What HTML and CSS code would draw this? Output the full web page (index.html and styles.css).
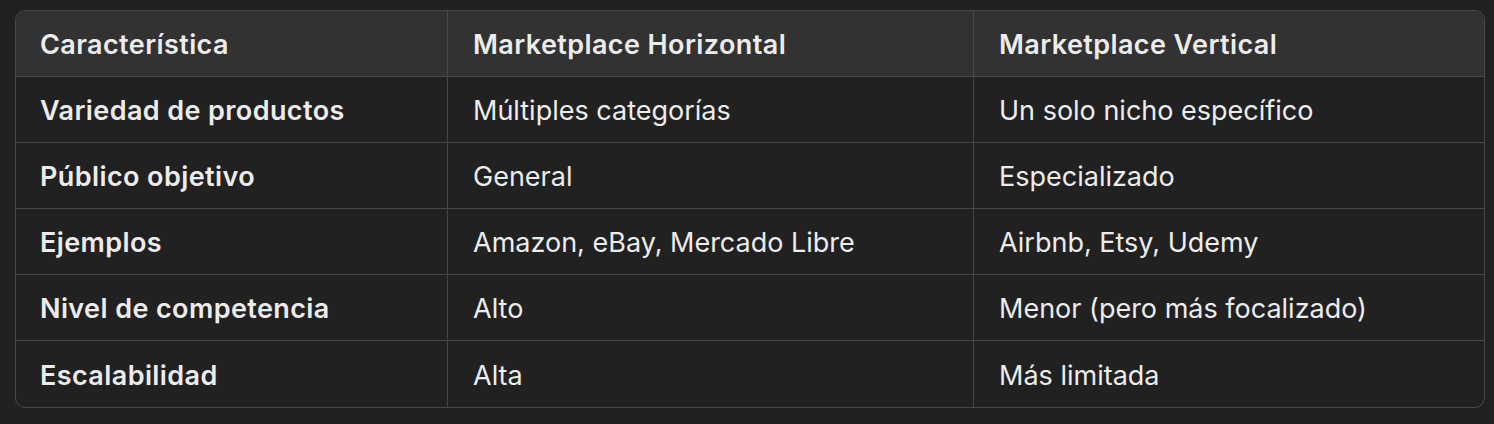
FILE: index.html
```html
<!DOCTYPE html>
<html lang="es">
<head>
<meta charset="utf-8">
<link rel="stylesheet" href="styles.css">
</head>
<body>
<div class="wrap">
<table class="cmp">
<colgroup><col class="c1"><col class="c2"><col class="c3"></colgroup>
<thead>
<tr><th>Característica</th><th>Marketplace Horizontal</th><th>Marketplace Vertical</th></tr>
</thead>
<tbody>
<tr><td class="k">Variedad de productos</td><td>Múltiples categorías</td><td>Un solo nicho específico</td></tr>
<tr><td class="k">Público objetivo</td><td>General</td><td>Especializado</td></tr>
<tr><td class="k">Ejemplos</td><td>Amazon, eBay, Mercado Libre</td><td>Airbnb, Etsy, Udemy</td></tr>
<tr><td class="k">Nivel de competencia</td><td>Alto</td><td>Menor (pero más focalizado)</td></tr>
<tr><td class="k">Escalabilidad</td><td>Alta</td><td>Más limitada</td></tr>
</tbody>
</table>
</div>
</body>
</html>
```
FILE: styles.css
```css
html, body {
  margin: 0;
  padding: 0;
  background: #212121;
}
body {
  font-family: Inter, "Noto Sans", sans-serif;
  color: #ececec;
}
.wrap {
  padding: 10px 9px 0 15px;
}
.cmp {
  width: 1470px;
  border-collapse: separate;
  border-spacing: 0;
  border: 1px solid #474747;
  border-radius: 10px;
  overflow: hidden;
  table-layout: fixed;
  font-size: 27px;
}
.c1 { width: 431px; }
.c2 { width: 526px; }
.c3 { width: auto; }
th, td {
  padding: 2px 24px 0 25px;
  text-align: left;
  vertical-align: middle;
  box-sizing: border-box;
  border-bottom: 1px solid #474747;
  border-left: 1px solid #474747;
  white-space: nowrap;
}
th:first-child, td:first-child {
  border-left: none;
  padding-left: 24px;
}
tbody tr:last-child td { border-bottom: none; }
th {
  background: #323232;
  font-weight: 600;
  letter-spacing: 0.4px;
  height: 66px;
}
td { font-weight: 400; height: 66px; }
td.k { font-weight: 600; letter-spacing: 0.4px; }
```
